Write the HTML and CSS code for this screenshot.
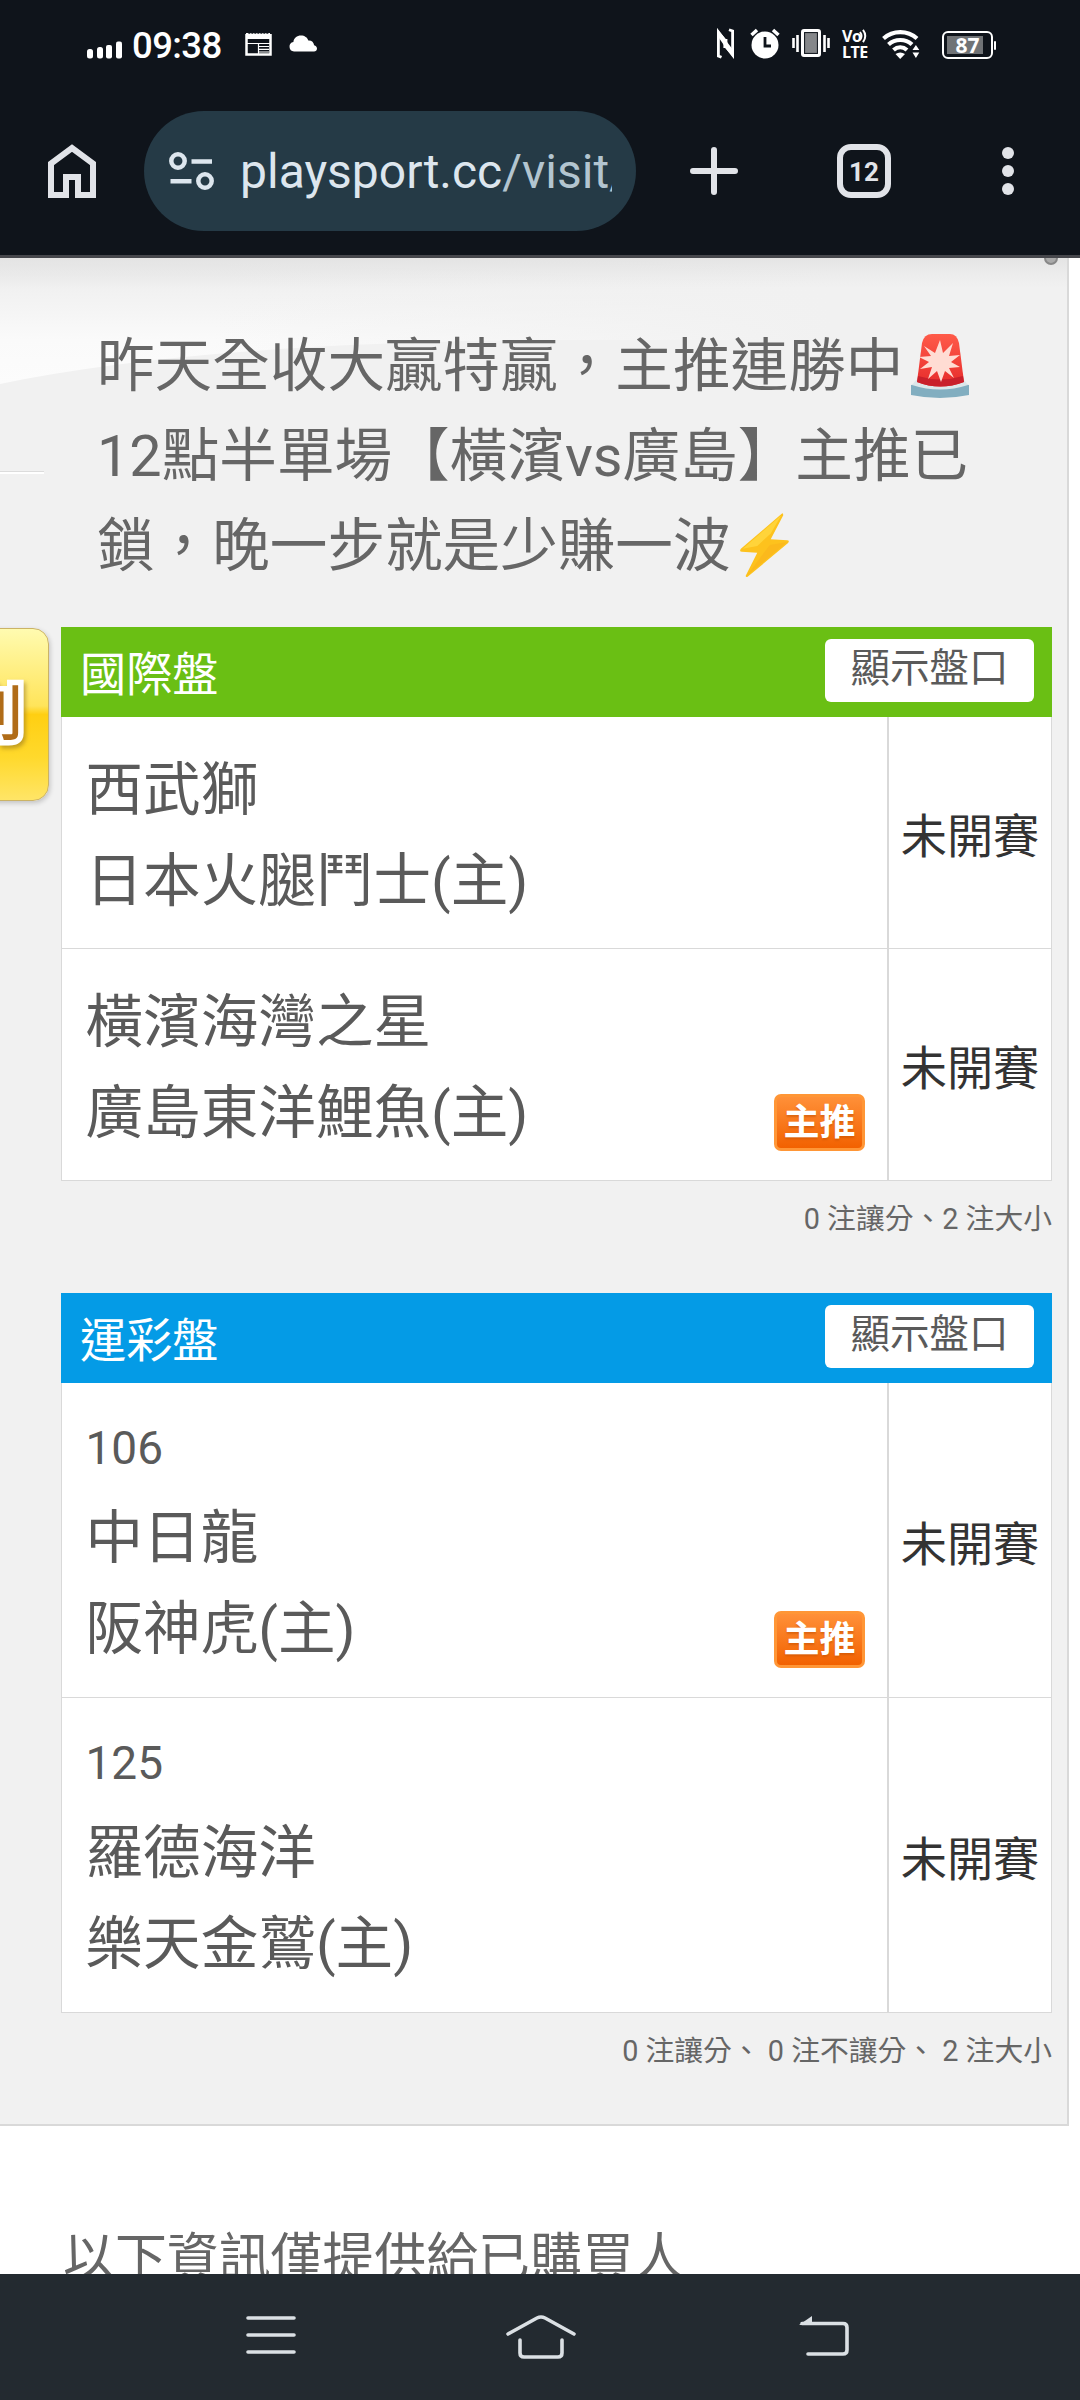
FILE: index.html
```html
<!DOCTYPE html>
<html lang="zh-Hant">
<head>
<meta charset="utf-8">
<title>playsport.cc</title>
<link rel="stylesheet" href="styles.css">
</head>
<body>
<header class="browser">
  <div class="statusbar">
    <div class="status-left">
      <svg class="signal" width="36" height="18" viewBox="0 0 36 18" fill="#fff"><rect x="0" y="8" width="6" height="9.5" rx="2.5"/><rect x="10" y="6" width="6" height="11.500" rx="2.500"/><rect x="19" y="4" width="6" height="13.500" rx="2"/><rect x="29" y="0.500" width="6" height="17" rx="2"/></svg>
      <span class="clock">09:38</span>
      <svg class="news" width="27" height="24" viewBox="0 0 27 24"><path d="M1.500 2v20.500h24V2" fill="none" stroke="#fff" stroke-width="2.500"/><path d="M1 1h2l1 1 2-1 1 1 2-1 1 1 2-1 1 1 2-1 1 1 2-1 1 1 2-1 1 1 2-1h1v6H1z" fill="#fff"/><path d="M1 11.500h25M13.500 12v11" stroke="#fff" stroke-width="1.200"/><path d="M14 14.500h10M14 17.300h10M14 20h10" stroke="#fff" stroke-width="1.200"/></svg>
      <svg class="cloud" width="28" height="17" viewBox="0 0 28 17"><path d="M5 16.500a4.800 4.800 0 0 1-.6-9.500C4.800 3 8 .5 12 .5c3.500 0 6.500 2 7.300 5 3.200-.3 5.600 1.800 5.800 4.800 1.800.5 2.900 1.800 2.900 3.200 0 1.700-1.300 3-3 3z" fill="#fff"/></svg>
    </div>
    <div class="status-right">
      <svg class="nfc" width="19" height="31" viewBox="0 0 19 31" fill="none" stroke="#fff" stroke-width="2.800"><path d="M5.500 29.300L2.400 28V4L8.800 12.500V20"/><path d="M13 1.700L16.600 3V27L10 18.500V11"/><path d="M1 .8L10.200 11.500V20.500L3 10zM18 30.200L8.800 19.500V11L16 20.500z" fill="#fff" stroke="none"/></svg>
      <svg class="alarm" width="30" height="31" viewBox="0 0 30 31"><circle cx="15" cy="17" r="13.500" fill="#fff"/><path d="M1.500 7L7 2M28.500 7L23 2" stroke="#fff" stroke-width="3.500"/><path d="M15 9v9h6" fill="none" stroke="#0f141b" stroke-width="2.800"/></svg>
      <svg class="vibrate" width="38" height="30" viewBox="0 0 38 30"><rect x="10.500" y="2.500" width="17" height="25" rx="1.500" fill="#85878a" stroke="#fff" stroke-width="3"/><rect x="12.600" y="4.600" width="12.800" height="20.800" fill="none" stroke="#0f141b"/><path d="M5.500 7v17M1.500 10v10M32.500 7v17M36.500 10v10" stroke="#fff" stroke-width="2.600"/></svg>
      <div class="volte"><span class="vo">Vo<svg width="9" height="14" viewBox="0 0 9 14" fill="none" stroke="#fff" stroke-width="2"><path d="M1 3q3 4 0 8M4 .8q4.500 6 0 12.400"/></svg></span><span class="lte">LTE</span></div>
      <svg class="wifi" width="38" height="29" viewBox="0 0 38 29"><g fill="none" stroke="#fff" stroke-width="4.200"><path d="M1.500 8.500C11 0 25.500 0 35 8.500"/><path d="M6.500 14.500c6.500-6 17-6 23.500 0"/><path d="M11.500 20c4-3.500 9.500-3.500 13.500 0"/></g><path d="M13.500 24c3-2 6.500-2 9.500 0L18.200 29z" fill="#fff"/><path d="M30.500 20l3.400-5 3.400 5zM30.500 22.500l3.400 5.500 3.400-5.500z" fill="#fff"/></svg>
      <div class="battery"><span class="charge">87</span></div>
    </div>
  </div>
  <div class="toolbar">
    <svg class="home" width="48" height="54" viewBox="0 0 48 54"><path d="M3 51V19.500L24 4l21 15.500V51H30V33H18v18z" fill="none" stroke="#e1e3e8" stroke-width="6"/></svg>
    <div class="urlbar">
      <svg class="tune" width="46" height="40" viewBox="0 0 46 40" fill="none" stroke="#dde6ee" stroke-width="4.500"><circle cx="9" cy="10" r="6.700"/><circle cx="36" cy="30" r="6.700"/><path d="M22.500 10.500H43M1.500 30.300h21"/></svg>
      <span class="url">playsport.cc<span class="path">/visit/</span></span>
    </div>
    <svg class="plus" width="48" height="48" viewBox="0 0 48 48"><path d="M3 24h42M24 3v42" stroke="#e1e3e8" stroke-width="6" stroke-linecap="round"/></svg>
    <div class="tabs">12</div>
    <svg class="dots" width="12" height="48" viewBox="0 0 12 48" fill="#e1e3e8"><circle cx="6" cy="6" r="6"/><circle cx="6" cy="24" r="6"/><circle cx="6" cy="42" r="6"/></svg>
  </div>
</header>

<main class="page">
  <section class="panel">
    <svg class="sheen" width="1067" height="160" viewBox="0 0 1067 160" preserveAspectRatio="none">
      <defs>
        <linearGradient id="top" x1="0" y1="0" x2="0" y2="1"><stop offset="0" stop-color="#e8e8e8"/><stop offset=".25" stop-color="#f1f1f1"/><stop offset=".65" stop-color="#fafafa"/><stop offset="1" stop-color="#fcfcfc"/></linearGradient>
        <linearGradient id="side" x1="0" y1="0" x2="1" y2="0"><stop offset=".2" stop-color="#f1f1f1" stop-opacity="0"/><stop offset=".78" stop-color="#f1f1f1"/></linearGradient>
        <linearGradient id="shade" x1="0" y1="0" x2="0" y2="1"><stop offset="0" stop-color="#e4e4e4"/><stop offset="1" stop-color="#e8e8e8" stop-opacity="0"/></linearGradient>
      </defs>
      <path d="M0 0H1067V82H540Q200 85 0 126z" fill="url(#top)"/>
      <path d="M0 0H1067V160H0z" fill="url(#side)"/>
      <path d="M0 0H1067V30H0z" fill="url(#shade)"/>
    </svg>
    <span class="pin"></span>
    <span class="rule"></span>
    <div class="side-tab"><span>別</span></div>

    <p class="message">昨天全收大贏特贏，主推連勝中<svg class="emoji siren" viewBox="0 0 60 66"><defs><linearGradient id="red" x1="0" y1="0" x2="0" y2="1"><stop offset="0" stop-color="#ff5b49"/><stop offset="1" stop-color="#e62b2b"/></linearGradient></defs><path d="M1 52Q30 47 59 52v10Q30 68 1 62z" fill="#82aec0"/><path d="M2 52L6 47H54L58 52Q30 61 2 52z" fill="#dce7ea"/><path d="M12 10Q14 1 22 1H40Q47 1 49 10L54 49Q30 58 7 49z" fill="url(#red)"/><path d="M8 43Q30 50 53 43L54 49Q30 58 7 49z" fill="#c9202b"/><path d="M30 7l3 13 10-10-4 13 11-1-9 7 9 5-11 1 5 10-9-7-4 11-4-11-9 8 4-12-12 2 9-7-10-5 12-1-7-10 11 7z" fill="#ffdcd3"/></svg><br>12點半單場【橫濱vs廣島】主推已<br>鎖，晚一步就是少賺一波<svg class="emoji bolt" viewBox="0 0 54 68"><path d="M46 1L3 38Q1 41 4 41L20 42 8 66Q8 68 10 67L52 32Q54 29 51 29L34 28 47 3Q47 1 46 1z" fill="#fdc21d"/><path d="M45 3L5 38l15-3L34 22z" fill="#ffd43a"/><path d="M9 66L51 31 33 34z" fill="#f5a91e" opacity=".35"/></svg></p>

    <section class="board intl">
      <div class="board-head"><h2>國際盤</h2><button>顯示盤口</button></div>
      <div class="game">
        <div class="teams"><p>西武獅</p><p>日本火腿鬥士(主)</p></div>
        <div class="state">未開賽</div>
      </div>
      <div class="game">
        <div class="teams"><p>橫濱海灣之星</p><p>廣島東洋鯉魚(主)</p><span class="pick">主推</span></div>
        <div class="state">未開賽</div>
      </div>
      <p class="summary">0 注讓分、2 注大小</p>
    </section>

    <section class="board lottery">
      <div class="board-head"><h2>運彩盤</h2><button>顯示盤口</button></div>
      <div class="game">
        <div class="teams"><p class="no">106</p><p>中日龍</p><p>阪神虎(主)</p><span class="pick">主推</span></div>
        <div class="state">未開賽</div>
      </div>
      <div class="game">
        <div class="teams"><p class="no">125</p><p>羅德海洋</p><p>樂天金鷲(主)</p></div>
        <div class="state">未開賽</div>
      </div>
      <p class="summary">0 注讓分、 0 注不讓分、 2 注大小</p>
    </section>
  </section>
  <p class="notice">以下資訊僅提供給已購買人</p>
</main>

<nav class="navbar">
  <svg width="50" height="42" viewBox="0 0 50 42" stroke="#dbe0e4" stroke-width="3.600" stroke-linecap="round"><path d="M2 3h46M2 20h46M2 37h46"/></svg>
  <svg width="72" height="46" viewBox="0 0 72 46" fill="none" stroke="#dbe0e4" stroke-width="3.600" stroke-linecap="round" stroke-linejoin="round"><path d="M3 20L32 4q4-2 8 0l29 16M15 26v13q0 4 4 4h34q4 0 4-4V26"/></svg>
  <svg width="52" height="43" viewBox="0 0 52 43" fill="none" stroke="#dbe0e4" stroke-width="3.600" stroke-linecap="round"><path d="M4 8.500h41q4 0 4 4V35q0 4-4 4H10"/><path d="M14 1v9H1z" fill="#dbe0e4" stroke="none"/></svg>
</nav>
</body>
</html>
```
FILE: styles.css
```css
* { box-sizing: border-box; margin: 0; padding: 0; }
body {
  width: 1080px; height: 2400px; overflow: hidden;
  display: flex; flex-direction: column;
  font-family: Roboto, "Noto Sans CJK TC", sans-serif;
  background: #fff; color: #666;
}
svg { display: block; flex: none; }

.browser { height: 258px; flex: none; background: #0f141b; border-bottom: 3px solid #46474c; color: #fff; }
.statusbar { height: 90px; display: flex; justify-content: space-between; align-items: flex-start; padding: 28px 84px 0 87px; }
.status-left, .status-right { display: flex; align-items: flex-start; }
.signal { margin-top: 13px; }
.clock { font-size: 36.500px; font-weight: 500; line-height: 36px; margin: 0 0 0 9px; width: 113px; letter-spacing: -.6px; }
.news { margin-top: 4px; }
.cloud { margin: 7px 0 0 17px; }
.alarm { margin-left: 15px; }
.vibrate { margin-left: 12px; }
.volte { display: flex; flex-direction: column; gap: 2px; width: 27px; margin: 1px 0 0 12px; font-family: "Open Sans", sans-serif; font-weight: 700; font-size: 16px; }
.vo, .lte { display: flex; height: 14px; line-height: 14px; letter-spacing: -.5px; }
.vo svg { margin-left: -2px; }
.wifi { margin: 2px 0 0 13px; }
.battery { position: relative; width: 51px; height: 28px; margin: 3px 3px 0 22px; padding: 3px; border: 2px solid #fff; border-radius: 6px; }
.battery::after { content: ""; position: absolute; right: -5px; top: 8px; width: 2px; height: 9px; background: #fff; border-radius: 1px; }
.charge { display: block; height: 18px; background: linear-gradient(90deg, #707376 87%, transparent 87%); font: 700 21px/18px "Open Sans", sans-serif; text-align: center; }

.toolbar { height: 165px; display: flex; align-items: center; padding: 0 66px 3px 48px; }
.urlbar { width: 492px; height: 120px; margin-left: 48px; padding-left: 25px; border-radius: 60px; background: #253a46; display: flex; align-items: center; }
.url { width: 372px; margin: 2px 0 0 25px; overflow: hidden; white-space: nowrap; font-size: 48px; line-height: 64px; color: #dde6ee; }
.path { color: #b3c5d0; }
.plus { margin-left: 54px; }
.tabs { width: 54px; height: 54px; margin-left: 99px; border: 6px solid #e1e3e8; border-radius: 14px; color: #e1e3e8; font-size: 26px; font-weight: 700; line-height: 44px; text-align: center; }
.dots { margin-left: 111px; }

.page { height: 2016px; flex: none; overflow: hidden; }
.panel { position: relative; width: 1069px; height: 1868px; padding: 64px 16px 0 61px; background: #f1f1f1; border-right: 2px solid #d9d9d9; border-bottom: 2px solid #d9d9d9; }
.sheen { position: absolute; left: 0; top: 0; }
.pin { position: absolute; left: 1044px; top: -7px; width: 14px; height: 14px; border-radius: 50%; background: #aaa; border: 2px solid #888; clip-path: inset(7px 0 0 0); }
.rule { position: absolute; left: 0; top: 213px; width: 44px; height: 3px; background: #dcdcdc; border-bottom: 2px solid #fff; }
.side-tab { position: absolute; left: -102px; top: 370px; width: 151px; height: 173px; border: 1px solid #cbb366; border-radius: 16px; background: linear-gradient(#fffbb0, #ffe45a 45%, #ffcf12 50%, #ffd92c 75%, #ffe567); box-shadow: 1px 2px 5px #0003; display: flex; justify-content: flex-end; align-items: center; }
.side-tab span { font-size: 60px; line-height: 68px; font-weight: 500; margin-right: 25px; color: #b06c18; -webkit-text-stroke: 11px #fff; paint-order: stroke fill; filter: drop-shadow(2px 3px 2px #8a6a2088); }

.message { position: relative; padding-left: 36px; height: 305px; font-size: 57.600px; line-height: 90px; color: #666; white-space: nowrap; }
.emoji { display: inline-block; vertical-align: -13px; }
.siren { width: 60px; height: 66px; margin: 0 0 0 7px; }
.bolt { width: 52px; height: 68px; margin-left: 7px; }

.board { position: relative; width: 991px; }
.board-head { height: 90px; display: flex; justify-content: space-between; align-items: flex-start; padding: 12px 18px 0 19px; color: #fff; }
.intl .board-head { background: #6abf14; }
.lottery .board-head { background: #049be6; }
h2 { font-size: 46.200px; font-weight: 400; line-height: 72px; }
button { width: 209px; height: 63px; border: 0; border-radius: 6px; background: #fff; color: #5a5a5a; font: 39.500px/56px Roboto, "Noto Sans CJK TC", sans-serif; padding-bottom: 3px; }
.game { display: flex; height: 232px; background: #fff; border: 1.500px solid #d9d9d9; border-top: 0; }
.lottery .game { height: 315px; }
.teams { position: relative; width: 827px; border-right: 2px solid #d9d9d9; padding: 29px 0 0 23.500px; font-size: 57.600px; line-height: 90.500px; color: #5a5a5a; }
.teams p { height: 91px; }
.no { font-size: 46px; }
.lottery .teams { padding-top: 20px; }
.state { flex: 1; display: flex; align-items: center; justify-content: center; font-size: 46.200px; color: #333; }
.pick { position: absolute; right: 22px; bottom: 29px; width: 91px; height: 57px; border: 3px solid #ff9636; border-radius: 7px; background: linear-gradient(#ff9038, #f26100); color: #fff; font-size: 36px; font-weight: 700; line-height: 53px; text-align: center; text-shadow: 0 2px 2px #c4500088; }
.summary { height: 112px; padding-top: 17px; text-align: right; font-size: 28.800px; line-height: 42px; color: #666; }
.notice { padding: 95px 0 0 63px; font-size: 51.900px; line-height: 76px; white-space: nowrap; }

.navbar { height: 126px; flex: none; background: #232a30; display: flex; align-items: flex-start; padding: 41px 231px 0 246px; }
.navbar svg:nth-child(2) { margin: -1px 0 0 209px; }
.navbar svg:nth-child(3) { margin-left: 221px; }
```
